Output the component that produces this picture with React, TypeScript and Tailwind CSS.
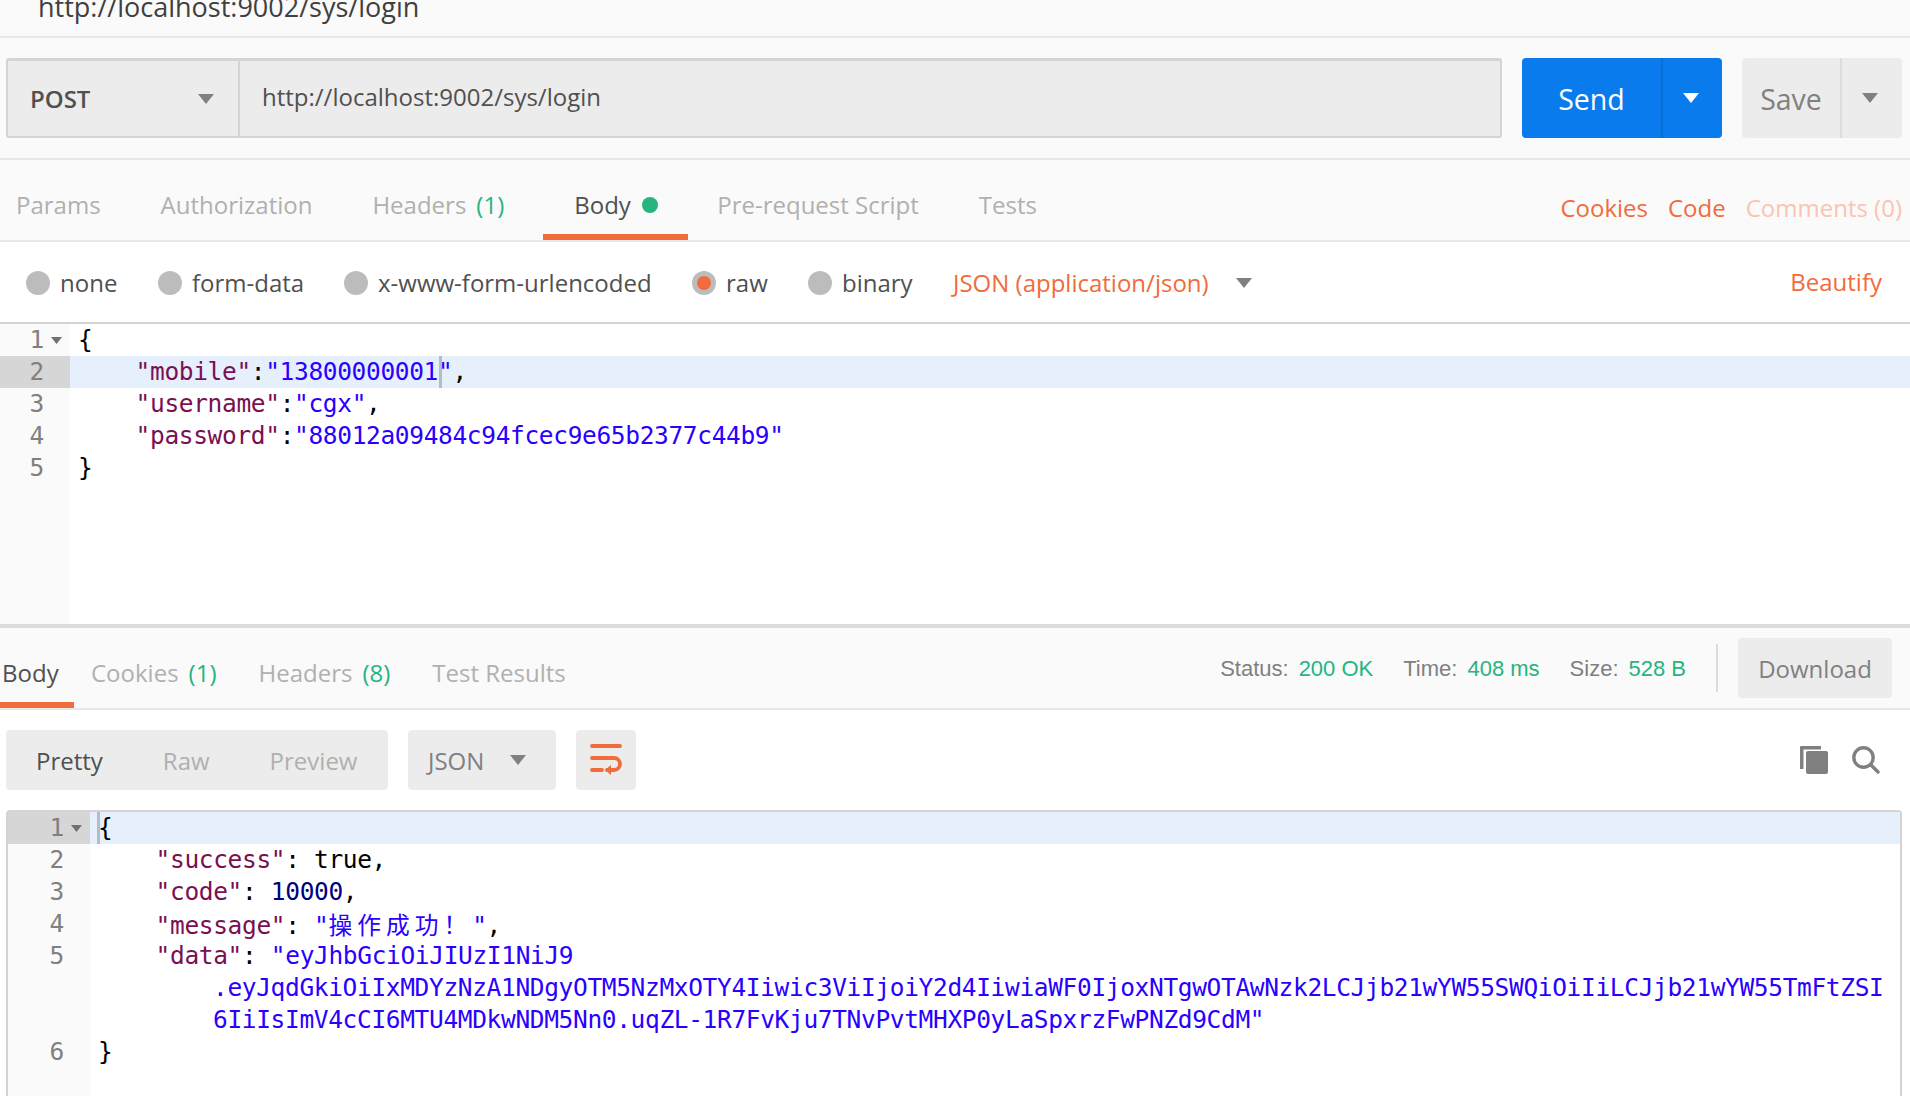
import React from 'react';

const Caret = ({ className }: { className: string }) => (
  <svg className={className} viewBox="0 0 16 10">
    <polygon points="0,0 16,0 8,10" fill="currentColor" />
  </svg>
);

const Radio = ({ label, active, className }: { label: string; active?: boolean; className: string }) => (
  <div className={`flex items-center ${className}`}>
    <span className="flex h-6 w-6 items-center justify-center rounded-full bg-[#bcbcbc]">
      {active && <span className="h-[14px] w-[14px] rounded-full bg-[#f26b3a]" />}
    </span>
    <span className="ml-[10px] text-[24px] text-[#505050]">{label}</span>
  </div>
);

const Key = ({ children }: { children: React.ReactNode }) => <span className="text-[#7a0f52]">{children}</span>;
const Str = ({ children }: { children: React.ReactNode }) => <span className="text-[#2a00ff]">{children}</span>;

const Num = ({ n, active, fold, tall }: { n: number; active?: boolean; fold?: boolean; tall?: boolean }) => (
  <div className={`relative flex justify-end ${tall ? 'h-[96px]' : 'h-8'} ${active ? 'bg-[#d6d6d6]' : ''}`}>
    <span className="pr-[26px] text-[#808080]">{n}</span>
    {fold && <Caret className="absolute right-[8px] top-[13px] h-[7px] w-[11px] text-[#707070]" />}
  </div>
);

const Row = ({ children, active }: { children?: React.ReactNode; active?: boolean }) => (
  <div className={`h-8 whitespace-pre ${active ? 'bg-[#e6f0fc]' : ''}`}>{children}</div>
);

export default function App() {
  return (
    <div className="h-[1096px] w-[1910px] overflow-hidden bg-white font-['Open_Sans',sans-serif]">
      {/* Tab title, cut off by the top of the shot */}
      <div className="flex h-[38px] items-end overflow-hidden border-b-2 border-[#e8e8e8] bg-[#fafafa] pb-[16px] pl-[38px]">
        <span className="text-[27px] font-medium leading-[27px] text-[#404040]">http://localhost:9002/sys/login</span>
      </div>

      {/* Request line */}
      <div className="flex h-[122px] items-center border-b-2 border-[#e8e8e8] bg-[#fafafa] pl-[6px]">
        <div className="flex h-20 w-[1496px] rounded-[3px] border-2 border-t-[3px] border-[#d4d4d4] border-l-[#d4d4d4] bg-[#ececec]">
          <div className="flex w-[232px] items-center justify-between border-r-2 border-[#d4d4d4] pl-[22px] pr-[24px]">
            <span className="text-[24px] font-semibold text-[#505050]">POST</span>
            <Caret className="h-[10px] w-4 text-[#808080]" />
          </div>
          <span className="pl-[22px] pt-[19px] text-[24px] leading-[33px] text-[#505050]">http://localhost:9002/sys/login</span>
        </div>
        <div className="ml-[20px] flex h-20 w-[200px] rounded-[4px] bg-[#097bed] text-white">
          <span className="flex w-[139px] items-center justify-center pt-[2px] text-[28.5px] font-medium">Send</span>
          <span className="flex flex-1 items-center justify-center border-l-2 border-[#086fd6] pr-1">
            <Caret className="h-[10px] w-4" />
          </span>
        </div>
        <div className="ml-[20px] flex h-20 w-[160px] rounded-[4px] bg-[#ececec] text-[#808080]">
          <span className="flex w-[98px] items-center justify-center pt-[2px] text-[28.5px] font-medium">Save</span>
          <span className="flex flex-1 items-center justify-center border-l-2 border-[#dcdcdc] pr-1">
            <Caret className="h-[10px] w-4" />
          </span>
        </div>
      </div>

      {/* Request tabs */}
      <div className="flex h-[82px] items-stretch justify-between border-b-2 border-[#e8e8e8] bg-[#fafafa] pr-2 text-[24px] text-[#b0b0b0]">
        <div className="flex items-stretch">
          <span className="flex items-center pl-4 pr-[30px] pt-[10px]">Params</span>
          <span className="flex items-center px-[30px] pt-[10px]">Authorization</span>
          <span className="flex items-center pl-[30px] pr-[39px] pt-[10px]">
            Headers<span className="ml-[10px] text-[#26b47f]">(1)</span>
          </span>
          <span className="flex w-[145px] items-center border-b-[6px] border-[#f26b3a] pl-[31px] pt-[16px] text-[#505050]">
            Body<span className="ml-[11px] h-4 w-4 rounded-full bg-[#26b47f]" />
          </span>
          <span className="flex items-center pl-[29px] pr-[30px] pt-[10px]">Pre-request Script</span>
          <span className="flex items-center px-[30px] pt-[10px]">Tests</span>
        </div>
        <div className="flex items-center gap-[20px] pt-[15px]">
          <span className="text-[#f26b3a]">Cookies</span>
          <span className="text-[#f26b3a]">Code</span>
          <span className="text-[#fbc4b0]">Comments (0)</span>
        </div>
      </div>

      {/* Body type */}
      <div className="flex h-[82px] items-center border-b-2 border-[#d4d4d4] pl-[26px] pt-[2px]">
        <Radio label="none" className="w-[132px]" />
        <Radio label="form-data" className="w-[186px]" />
        <Radio label="x-www-form-urlencoded" className="w-[348px]" />
        <Radio label="raw" active className="w-[116px]" />
        <Radio label="binary" className="w-[145px]" />
        <span className="text-[24px] text-[#f26b3a]">JSON (application/json)</span>
        <Caret className="ml-[27px] h-[10px] w-4 text-[#808080]" />
        <span className="ml-auto pb-[2px] pr-[28px] text-[24px] text-[#f26b3a]">Beautify</span>
      </div>

      {/* Request editor */}
      <div className="flex h-[300px] font-['DejaVu_Sans_Mono',monospace] text-[24.5px] leading-[32px] tracking-[-0.35px] text-black">
        <div className="w-[70px] bg-[#fafafa]">
          <Num n={1} fold />
          <Num n={2} active />
          <Num n={3} />
          <Num n={4} />
          <Num n={5} />
        </div>
        <div className="flex-1">
          <Row>
            <span className="pl-2">{'{'}</span>
          </Row>
          <div className="relative">
            <Row active>
              <span className="pl-2">{'    '}</span>
              <Key>"mobile"</Key>:<Str>"13800000001"</Str>,
            </Row>
            <span className="absolute left-[369px] top-0 h-8 w-[3px] bg-[#b4bcc6]" />
          </div>
          <Row>
            <span className="pl-2">{'    '}</span>
            <Key>"username"</Key>:<Str>"cgx"</Str>,
          </Row>
          <Row>
            <span className="pl-2">{'    '}</span>
            <Key>"password"</Key>:<Str>"88012a09484c94fcec9e65b2377c44b9"</Str>
          </Row>
          <Row>
            <span className="pl-2">{'}'}</span>
          </Row>
        </div>
      </div>

      {/* Response header */}
      <div className="flex h-[86px] items-stretch justify-between border-y-[4px] border-b-2 border-t-[#dcdcdc] border-b-[#e8e8e8] bg-[#fafafa] pr-[18px] text-[24px] text-[#b0b0b0]">
        <div className="flex items-stretch">
          <span className="flex w-[74px] items-center border-b-[6px] border-[#f26b3a] pl-[2px] pt-[15px] text-[#505050]">Body</span>
          <span className="flex items-center pl-[17px] pr-[21px] pt-[9px]">
            Cookies<span className="ml-[10px] text-[#26b47f]">(1)</span>
          </span>
          <span className="flex items-center px-[21px] pt-[9px]">
            Headers<span className="ml-[10px] text-[#26b47f]">(8)</span>
          </span>
          <span className="flex items-center px-[21px] pt-[9px]">Test Results</span>
        </div>
        <div className="flex items-center font-['Liberation_Sans',sans-serif] text-[22px] text-[#808080]">
          <span>Status:</span>
          <span className="ml-[10px] text-[#26b47f]">200 OK</span>
          <span className="ml-[30px]">Time:</span>
          <span className="ml-[10px] text-[#26b47f]">408 ms</span>
          <span className="ml-[30px]">Size:</span>
          <span className="ml-[10px] text-[#26b47f]">528 B</span>
          <span className="ml-[30px] h-12 w-[2px] bg-[#dcdcdc]" />
          <span className="ml-[20px] flex h-[60px] w-[154px] items-center justify-center rounded-[4px] bg-[#ececec] pt-[2px] font-['Open_Sans',sans-serif] text-[24px]">
            Download
          </span>
        </div>
      </div>

      {/* Response toolbar */}
      <div className="flex h-[100px] items-center pl-[6px] pr-[30px] text-[24px]">
        <div className="flex h-[60px] w-[382px] items-center rounded-[4px] bg-[#ececec] pl-[30px] pt-[2px] text-[#b0b0b0]">
          <span className="text-[#505050]">Pretty</span>
          <span className="ml-[60px]">Raw</span>
          <span className="ml-[60px]">Preview</span>
        </div>
        <div className="ml-[20px] flex h-[60px] w-[148px] items-center rounded-[4px] bg-[#ececec] pl-[20px] text-[#808080]">
          <span className="pt-[2px]">JSON</span>
          <Caret className="ml-[26px] h-[10px] w-4" />
        </div>
        <div className="ml-[20px] flex h-[60px] w-[60px] items-center justify-center rounded-[4px] bg-[#ececec]">
          <svg className="h-8 w-8 text-[#f26b3a]" viewBox="0 0 32 32" fill="none" stroke="currentColor" strokeWidth="3.8" strokeLinecap="round">
            <path d="M2 2h28" />
            <path d="M2 14h22a6 6 0 0 1 0 12h-7" />
            <path d="M2 26h10" />
            <polygon points="15,26 21,21 21,31" fill="currentColor" stroke="none" />
          </svg>
        </div>
        <div className="ml-auto flex items-center gap-[24px] text-[#808080]">
          <svg className="h-7 w-7" viewBox="0 0 28 28" fill="currentColor">
            <path d="M1 0h20v3.5H3.5V23H0V1a1 1 0 0 1 1-1z" />
            <rect x="6" y="5" width="22" height="23" rx="2" />
          </svg>
          <svg className="h-7 w-7" viewBox="0 0 28 28" fill="none" stroke="currentColor" strokeWidth="3.4" strokeLinecap="round">
            <circle cx="11.5" cy="11.5" r="9.7" />
            <path d="M19 19L26 26" />
          </svg>
        </div>
      </div>

      {/* Response editor */}
      <div className="ml-[6px] mr-[8px] flex h-[290px] rounded-tl-[4px] rounded-tr-[4px] border-x-2 border-t-2 border-[#d4d4d4] font-['DejaVu_Sans_Mono',monospace] text-[24.5px] leading-[32px] tracking-[-0.35px] text-black">
        <div className="w-[82px] bg-[#fafafa]">
          <Num n={1} active fold />
          <Num n={2} />
          <Num n={3} />
          <Num n={4} />
          <Num n={5} tall />
          <Num n={6} />
        </div>
        <div className="relative flex-1">
          <Row active>
            <span className="pl-2">{'{'}</span>
          </Row>
          <span className="absolute left-[7px] top-0 h-8 w-[3px] bg-[#b4bcc6]" />
          <Row>
            <span className="pl-2">{'    '}</span>
            <Key>"success"</Key>: true,
          </Row>
          <Row>
            <span className="pl-2">{'    '}</span>
            <Key>"code"</Key>: <span className="text-[#000080]">10000</span>,
          </Row>
          <Row>
            <span className="pl-2">{'    '}</span>
            <Key>"message"</Key>: <Str>"<span className="font-['Noto_Sans_CJK_SC',sans-serif] text-[23.75px] tracking-[5px]">操作成功！</span>"</Str>,
          </Row>
          <Row>
            <span className="pl-2">{'    '}</span>
            <Key>"data"</Key>: <Str>"eyJhbGciOiJIUzI1NiJ9</Str>
          </Row>
          <div className="h-8 whitespace-pre pl-[123px] text-[#2a00ff]">.eyJqdGkiOiIxMDYzNzA1NDgyOTM5NzMxOTY4Iiwic3ViIjoiY2d4IiwiaWF0IjoxNTgwOTAwNzk2LCJjb21wYW55SWQiOiIiLCJjb21wYW55TmFtZSI</div>
          <div className="h-8 whitespace-pre pl-[123px] text-[#2a00ff]">6IiIsImV4cCI6MTU4MDkwNDM5Nn0.uqZL-1R7FvKju7TNvPvtMHXP0yLaSpxrzFwPNZd9CdM"</div>
          <Row>
            <span className="pl-2">{'}'}</span>
          </Row>
        </div>
      </div>
    </div>
  );
}
